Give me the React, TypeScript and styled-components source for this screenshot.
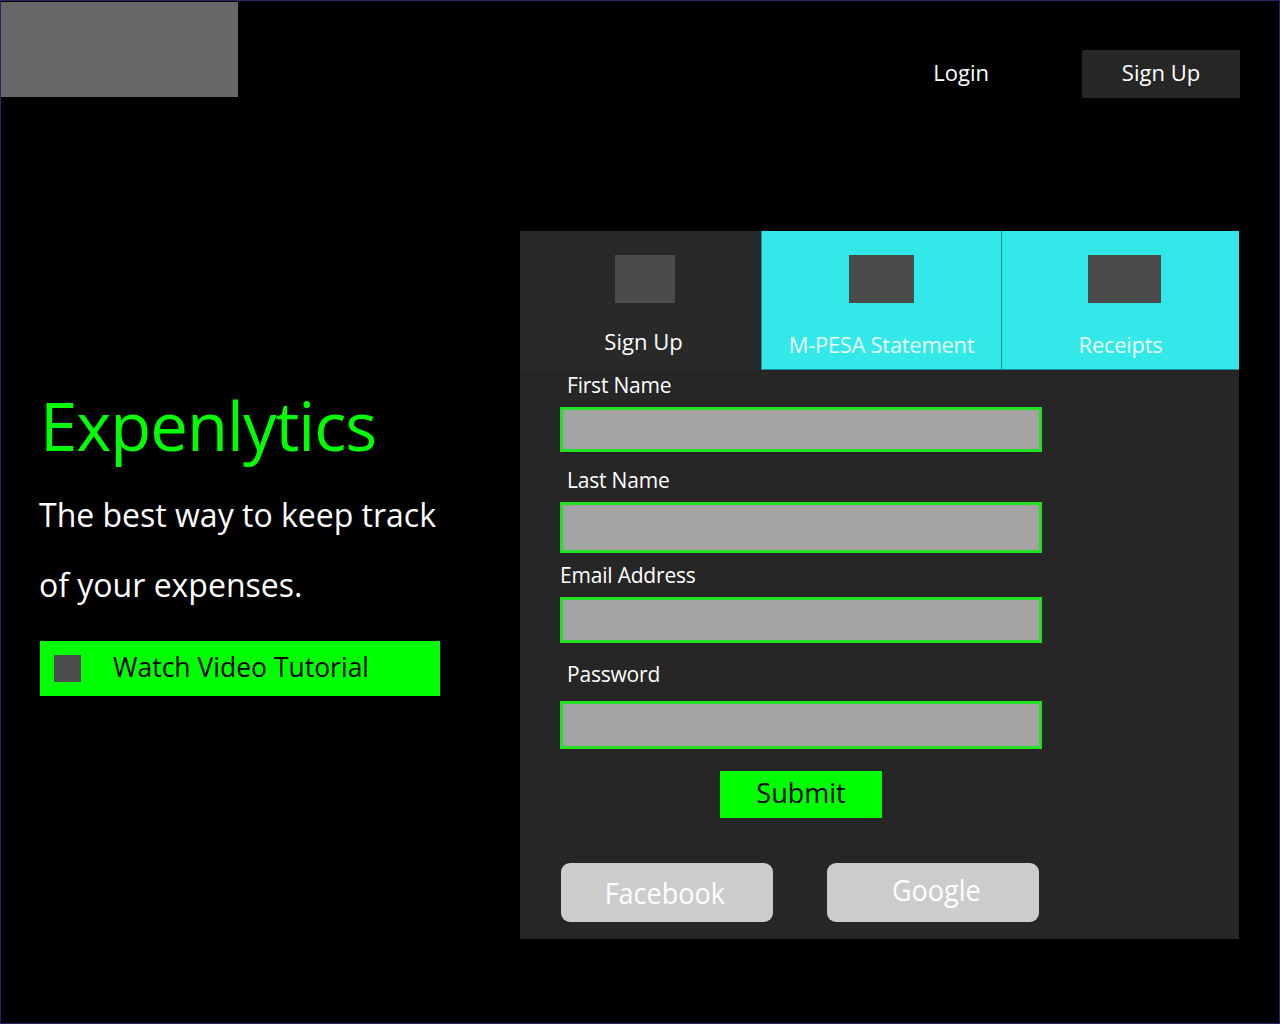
import React from "react";
import styled, { createGlobalStyle } from "styled-components";

const GlobalStyle = createGlobalStyle`
  html, body {
    margin: 0;
    padding: 0;
    background: #000;
  }
  * {
    box-sizing: border-box;
  }
`;

const Page = styled.div`
  width: 1280px;
  height: 1024px;
  background: #000;
  border: 1px solid #2b2566;
  font-family: "Open Sans", "Noto Sans", sans-serif;
  color: #fff;
  overflow: hidden;
`;

const Header = styled.header`
  display: flex;
  align-items: flex-start;
`;

const Logo = styled.div`
  width: 237px;
  height: 95px;
  margin-top: 1px;
  background: #686868;
`;

const Nav = styled.nav`
  display: flex;
  align-items: center;
  margin-left: auto;
  margin-top: 49px;
  margin-right: 39px;
`;

const NavLink = styled.a`
  font-size: 22px;
  line-height: 42px;
  padding-bottom: 4px;
  color: #fff;
  margin-right: 93px;
  cursor: pointer;
`;

const NavButton = styled.button`
  width: 158px;
  height: 48px;
  border: none;
  background: #262626;
  color: #fff;
  font-family: inherit;
  font-size: 22px;
  line-height: 42px;
  padding: 0 0 4px;
  cursor: pointer;
`;

const Main = styled.main`
  display: flex;
  align-items: flex-start;
  margin-top: 133px;
`;

const Hero = styled.section`
  width: 519px;
  padding-left: 39px;
  padding-top: 154px;
`;

const Title = styled.h1`
  margin: 0;
  font-size: 67px;
  font-weight: 400;
  line-height: 80px;
  color: #00ff00;
  letter-spacing: -1px;
`;

const Tagline = styled.p`
  margin: 15px 0 0 -1px;
  font-size: 32px;
  line-height: 70px;
  color: #fff;
`;

const TutorialButton = styled.button`
  display: flex;
  align-items: center;
  width: 400px;
  height: 55px;
  margin-top: 21px;
  padding: 0 0 3px 14px;
  border: none;
  background: #00ff00;
  color: #000;
  font-family: inherit;
  font-size: 26.5px;
  cursor: pointer;
`;

const PlayIcon = styled.span`
  width: 27px;
  height: 27px;
  margin-top: 3px;
  background: #4d4d4d;
  margin-right: 32px;
`;

const Panel = styled.section`
  width: 719px;
  background: #262626;
  padding-bottom: 17px;
`;

const Tabs = styled.div`
  display: grid;
  grid-template-columns: 241px 240px 238px;
  height: 139px;
`;

const Tab = styled.div<{ $active?: boolean }>`
  display: flex;
  flex-direction: column;
  align-items: center;
  padding-top: 24px;
  background: ${(p) => (p.$active ? "#292929" : "#33e8e8")};
  border-left: ${(p) => (p.$active ? "none" : "1px solid #1f8c9c")};
  border-bottom: ${(p) => (p.$active ? "none" : "1px solid #1f8c9c")};
  color: ${(p) => (p.$active ? "#fff" : "#eaffff")};
  cursor: pointer;
`;

const TabIcon = styled.div<{ $w: number; $shift?: number }>`
  width: ${(p) => p.$w}px;
  height: 48px;
  margin-left: ${(p) => (p.$shift ?? 0) * 2}px;
  background: #4b4b4b;
`;

const TabLabel = styled.span<{ $active?: boolean }>`
  margin-top: ${(p) => (p.$active ? "23px" : "26px")};
  margin-left: ${(p) => (p.$active ? "6px" : "0")};
  font-size: 22px;
  line-height: 30px;
  letter-spacing: ${(p) => (p.$active ? "0" : "-0.3px")};
`;

const Form = styled.form`
  display: flex;
  flex-direction: column;
  padding-left: 40px;
`;

const Label = styled.label<{ $indent?: number; $top: number }>`
  display: block;
  margin-top: ${(p) => p.$top}px;
  padding-left: ${(p) => p.$indent ?? 7}px;
  font-size: 21px;
  line-height: 30px;
  color: #fff;
  letter-spacing: -0.2px;
`;

const Input = styled.input<{ $h: number; $top: number }>`
  width: 482px;
  height: ${(p) => p.$h}px;
  margin-top: ${(p) => p.$top}px;
  border: 3px solid #22e022;
  background: #a3a3a3;
  outline: none;
  font-family: inherit;
  font-size: 18px;
  padding: 0 10px;
`;

const Submit = styled.button`
  align-self: flex-start;
  width: 162px;
  height: 47px;
  margin: 22px 0 0 160px;
  padding: 0 0 3px;
  border: none;
  background: #00ff00;
  color: #000;
  font-family: inherit;
  font-size: 27px;
  line-height: 40px;
  cursor: pointer;
`;

const SocialRow = styled.div`
  display: flex;
  gap: 54px;
  margin-top: 45px;
  padding-left: 1px;
`;

const SocialButton = styled.button`
  width: 212px;
  height: 59px;
  padding: 0;
  border: none;
  border-radius: 9px;
  background: #cccccc;
  color: #fff;
  font-family: inherit;
  cursor: pointer;
`;

const Condensed = styled.span<{ $raise?: number; $shift?: number }>`
  display: inline-block;
  font-size: 30px;
  transform: translate(${(p) => p.$shift ?? 0}px, ${(p) => -(p.$raise ?? 0)}px)
    scaleX(0.9);
`;

export default function App() {
  return (
    <Page>
      <GlobalStyle />
      <Header>
        <Logo />
        <Nav>
          <NavLink>Login</NavLink>
          <NavButton>Sign Up</NavButton>
        </Nav>
      </Header>
      <Main>
        <Hero>
          <Title>Expenlytics</Title>
          <Tagline>
            The best way to keep track
            <br />
            of your expenses.
          </Tagline>
          <TutorialButton>
            <PlayIcon />
            Watch Video Tutorial
          </TutorialButton>
        </Hero>
        <Panel>
          <Tabs>
            <Tab $active>
              <TabIcon $w={60} $shift={4} />
              <TabLabel $active>Sign Up</TabLabel>
            </Tab>
            <Tab>
              <TabIcon $w={65} />
              <TabLabel>M-PESA Statement</TabLabel>
            </Tab>
            <Tab>
              <TabIcon $w={73} $shift={4} />
              <TabLabel>Receipts</TabLabel>
            </Tab>
          </Tabs>
          <Form onSubmit={(e) => e.preventDefault()}>
            <Label $top={0}>First Name</Label>
            <Input $h={45} $top={7} />
            <Label $top={13}>Last Name</Label>
            <Input $h={51} $top={7} />
            <Label $top={7} $indent={0}>
              Email Address
            </Label>
            <Input $h={46} $top={7} />
            <Label $top={16}>Password</Label>
            <Input type="password" $h={48} $top={12} />
            <Submit type="submit">Submit</Submit>
            <SocialRow>
              <SocialButton type="button">
                <Condensed $shift={-2}>Facebook</Condensed>
              </SocialButton>
              <SocialButton type="button">
                <Condensed $raise={3} $shift={3}>
                  Google
                </Condensed>
              </SocialButton>
            </SocialRow>
          </Form>
        </Panel>
      </Main>
    </Page>
  );
}
